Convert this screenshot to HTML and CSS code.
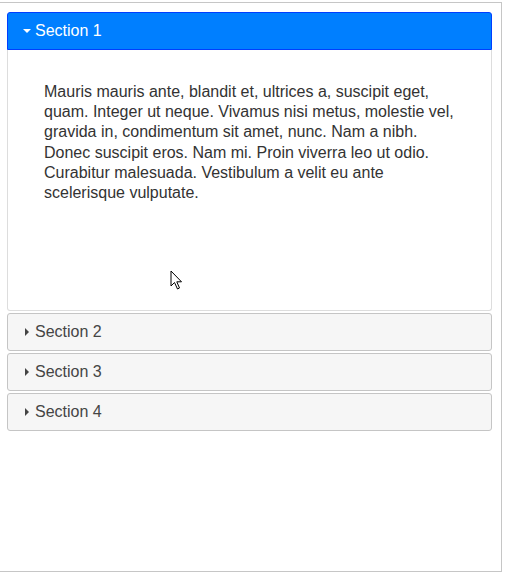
FILE: index.html
```html
<!DOCTYPE html>
<html>
<head>
<meta charset="utf-8">
<link rel="stylesheet" href="styles.css">
</head>
<body>
<div class="frame">
  <div class="accordion">
    <h3 class="header active"><span class="icon icon-down"></span>Section 1</h3>
    <div class="panel">
      <p>Mauris mauris ante, blandit et, ultrices a, suscipit eget, quam. Integer ut neque. Vivamus nisi metus, molestie vel, gravida in, condimentum sit amet, nunc. Nam a nibh. Donec suscipit eros. Nam mi. Proin viverra leo ut odio. Curabitur malesuada. Vestibulum a velit eu ante scelerisque vulputate.</p>
    </div>
    <h3 class="header"><span class="icon icon-right"></span>Section 2</h3>
    <h3 class="header"><span class="icon icon-right"></span>Section 3</h3>
    <h3 class="header"><span class="icon icon-right"></span>Section 4</h3>
  </div>
  <svg class="cursor" width="14" height="22" viewBox="0 0 14 22"><path d="M1 1 L1 16 L4.5 12.5 L7.5 19 L9.5 18 L6.8 11.8 L11.5 11.8 Z" fill="#fff" stroke="#000" stroke-width="1" stroke-linejoin="miter"/></svg>
</div>
</body>
</html>
```

FILE: styles.css
```css
html, body {
  margin: 0;
  padding: 0;
  background: #fff;
}

body {
  font-family: "Liberation Sans", Arial, sans-serif;
  font-size: 16px;
}

.frame {
  position: relative;
  margin: 2px 0 0 -1px;
  width: 485px;
  height: 559px;
  border: 1px solid #c6c6c6;
  padding: 9px 9px 0 7px;
}

.accordion {
  line-height: 1.3;
}

.header {
  margin: 2px 0 0 0;
  font-size: 16px;
  font-weight: normal;
  display: flex;
  align-items: center;
  height: 36px;
  padding: 0 8px 0 0;
  border: 1px solid #c5c5c5;
  border-radius: 3px;
  background: #f6f6f6;
  color: #454545;
}

.header.active {
  margin-top: 0;
  background: #007fff;
  border-color: #003eff;
  color: #fff;
  border-radius: 3px 3px 0 0;
}

.icon {
  width: 27px;
  display: flex;
  justify-content: flex-end;
  padding-right: 4px;
  box-sizing: border-box;
  flex: none;
}

.icon::before {
  content: "";
  display: block;
  width: 0;
  height: 0;
}

.icon-down::before {
  border-left: 4px solid transparent;
  border-right: 4px solid transparent;
  border-top: 4px solid #fff;
}

.icon-right::before {
  border-top: 4px solid transparent;
  border-bottom: 4px solid transparent;
  border-left: 4px solid #444;
  margin-right: 2px;
}

.panel {
  border: 1px solid #ddd;
  border-top: 0;
  border-radius: 0 0 3px 3px;
  padding: 16px 34px 16px 36px;
  height: 228px;
  color: #333;
  background: #fff;
}

.panel p {
  margin: 16px 0;
  line-height: 20.2px;
}

.cursor {
  position: absolute;
  left: 170px;
  top: 267px;
}
```
